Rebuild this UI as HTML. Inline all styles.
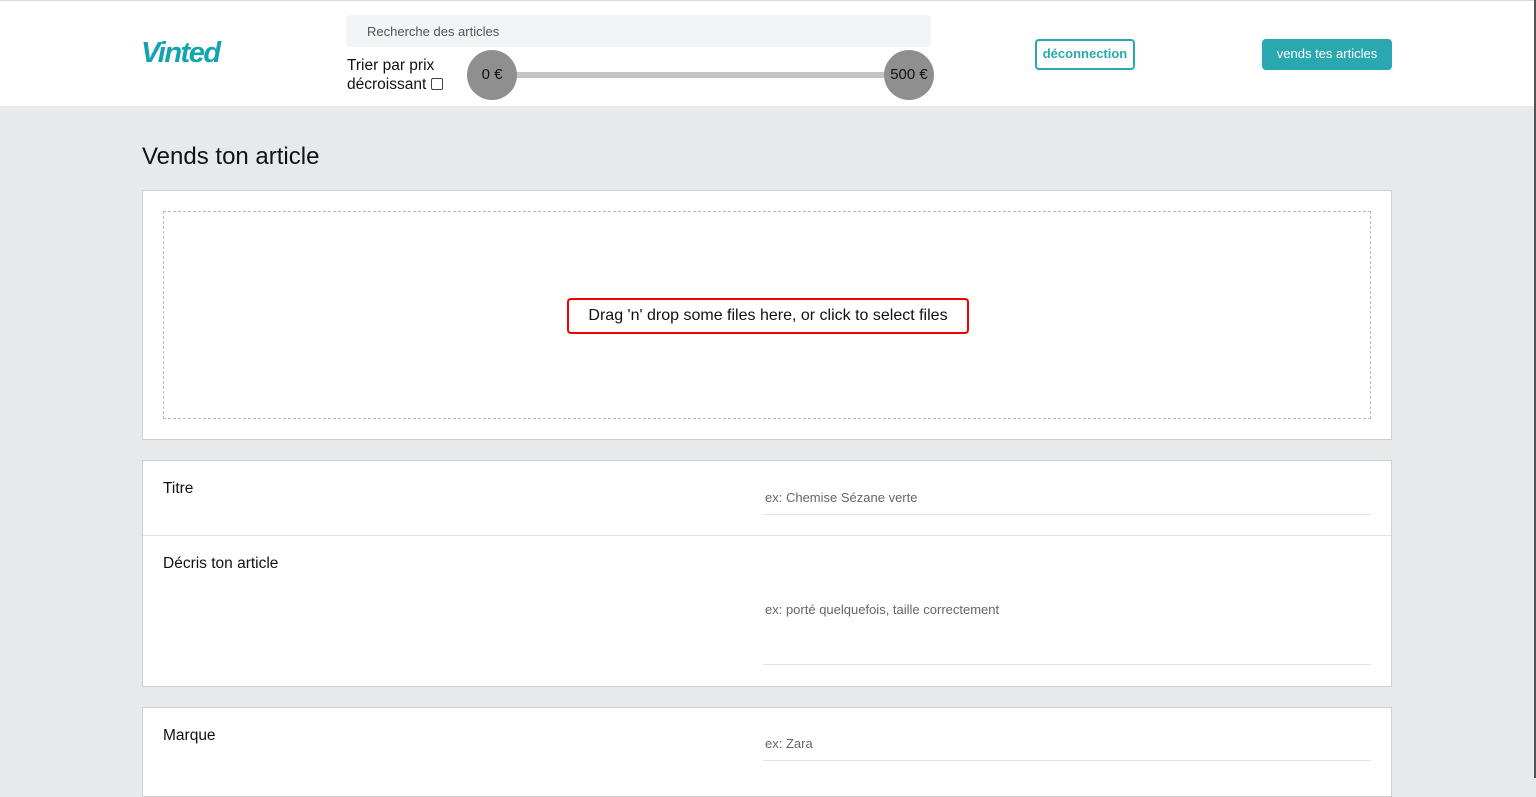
<!DOCTYPE html>
<html><head><meta charset="utf-8"><style>
*{box-sizing:border-box;margin:0;padding:0}
body{width:1536px;height:778px;overflow:hidden;background:#e8e9eb;font-family:"Liberation Sans",Arial,sans-serif;position:relative}
.hdr{position:absolute;left:0;top:0;width:1536px;height:106px;background:#fff;border-top:1px solid #d8d9dc}
.a{position:absolute}
.box{position:absolute;left:142px;width:1250px;background:#fff;border:1px solid #cfd0d2}
.lbl{position:absolute;left:20px;font-size:15.5px;color:#111}
.inp{position:absolute;left:620px;width:608px;border-bottom:1px solid #e3e3e3;font-size:13px;color:#666;padding-left:2px}
</style></head><body>
<div class="hdr">
 <div class="a" style="left:141px;top:36px;font-family:'Liberation Sans',sans-serif;font-style:italic;font-weight:bold;font-size:29px;color:#13a4b0;letter-spacing:-1.5px">Vinted</div>
 <div class="a" style="left:346px;top:14px;width:585px;height:32px;background:#f3f4f5;border-radius:4px;font-size:13px;color:#555;padding:9px 0 0 21px">Recherche des articles</div>
 <div class="a" style="left:347px;top:55px;font-size:15.5px;line-height:19px;color:#111">Trier par prix<br>décroissant <span style="display:inline-block;width:12px;height:12px;border:1px solid #444;border-radius:2px;vertical-align:-1px"></span></div>
 <div class="a" style="left:490px;top:71px;width:420px;height:6px;background:#c4c4c4"></div>
 <div class="a" style="left:467px;top:49px;width:50px;height:50px;border-radius:50%;background:#8f8f8f;font-size:15px;text-align:center;line-height:50px;color:#111">0 €</div>
 <div class="a" style="left:884px;top:49px;width:50px;height:50px;border-radius:50%;background:#8f8f8f;font-size:15px;text-align:center;line-height:50px;color:#111">500 €</div>
 <div class="a" style="left:1035px;top:38px;width:100px;height:31px;border:2px solid #2aa8b1;border-radius:4px;color:#2aa8b1;font-weight:bold;font-size:13px;text-align:center;line-height:26px">déconnection</div>
 <div class="a" style="left:1262px;top:38px;width:130px;height:31px;background:#2aa8b1;border-radius:4px;color:#fff;font-size:13px;text-align:center;line-height:30px">vends tes articles</div>
</div>
<div class="a" style="left:1534px;top:0;width:2px;height:778px;background:#555"></div>
<div class="a" style="left:142px;top:143px;font-size:24px;color:#111">Vends ton article</div>
<div class="box" style="top:190px;height:250px">
 <div class="a" style="left:20px;top:20px;width:1208px;height:208px;border:1px dashed #bbb"></div>
 <div class="a" style="left:424px;top:107px;width:402px;height:36px;border:2px solid #e00;border-radius:4px;font-size:16px;text-align:center;line-height:32px;color:#111">Drag 'n' drop some files here, or click to select files</div>
</div>
<div class="box" style="top:460px;height:227px">
 <div class="lbl" style="top:19px">Titre</div>
 <div class="inp" style="top:29px;height:25px">ex: Chemise Sézane verte</div>
 <div class="a" style="left:0;top:74px;width:1248px;height:1px;background:#e3e3e3"></div>
 <div class="lbl" style="top:94px">Décris ton article</div>
 <div class="inp" style="top:141px;height:63px">ex: porté quelquefois, taille correctement</div>
</div>
<div class="box" style="top:707px;height:90px">
 <div class="lbl" style="top:19px">Marque</div>
 <div class="inp" style="top:28px;height:25px">ex: Zara</div>
</div>
</body></html>
